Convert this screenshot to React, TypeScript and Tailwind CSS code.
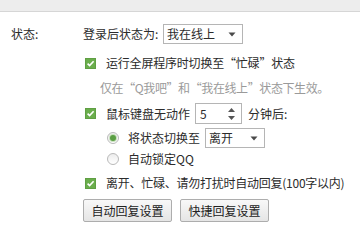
import React from "react";

function Check() {
  return (
    <span className="flex h-[11px] w-[11px] shrink-0 items-center justify-center bg-[#6aad4c] border border-[#5f9f43]">
      <svg width="9" height="9" viewBox="0 0 9 9">
        <path d="M1.6 4.6 L3.6 6.6 L7.6 2.2" fill="none" stroke="#ffffff" strokeWidth="1.6" />
      </svg>
    </span>
  );
}

function Radio({ on }: { on?: boolean }) {
  return (
    <span className="flex h-[12px] w-[12px] shrink-0 items-center justify-center rounded-full border border-[#b9b9b9] bg-gradient-to-b from-[#ececec] to-[#ffffff]">
      {on ? <span className="h-[6px] w-[6px] rounded-full bg-[#5a9e43] shadow-[0_0_0_1px_#c7e0bd]" /> : null}
    </span>
  );
}

function DownTri() {
  return (
    <svg width="8" height="5" viewBox="0 0 8 5">
      <path d="M0.5 0.5 L7.5 0.5 L4 4.5 Z" fill="#4a4a4a" />
    </svg>
  );
}

function Select({ label, w }: { label: string; w: string }) {
  return (
    <div className={`flex h-[20px] ${w} items-center justify-between border border-[#b5b5b5] bg-white pl-[3px] pr-[6px]`}>
      <span>{label}</span>
      <DownTri />
    </div>
  );
}

function Btn({ children }: { children: React.ReactNode }) {
  return (
    <div className="flex h-[23px] w-[89px] items-center justify-center rounded-[2px] border border-[#adadad] bg-gradient-to-b from-[#f8f8f8] to-[#e5e5e5] text-[#222]">
      {children}
    </div>
  );
}

export default function App() {
  return (
    <div className="relative h-[244px] w-[360px] overflow-hidden bg-white text-[12px] leading-none text-[#2b2b2b] font-['Noto_Sans_CJK_SC','Noto_Sans',sans-serif]">
      <div className="h-[12px] border-b border-[#d6d6d6] bg-[#ededed]" />
      <div className="flex pt-[12px]">
        <div className="w-[83px] pl-[11px]">
          <div className="flex h-[20px] items-center">状态:</div>
        </div>
        <div className="flex flex-col">
          <div className="flex h-[20px] items-center">
            <span className="w-[80px]">登录后状态为:</span>
            <Select label="我在线上" w="w-[80px]" />
          </div>
          <div className="mt-[9px] flex h-[20px] items-center pl-[2px]">
            <Check />
            <span className="ml-[10px] tracking-[-0.2px]">运行全屏程序时切换至“忙碌”状态</span>
          </div>
          <div className="mt-[5px] flex h-[20px] items-center pl-[17px] text-[#9a9a9a] tracking-[-0.4px]">
            仅在“Q我吧”和“我在线上”状态下生效。
          </div>
          <div className="mt-[5px] flex h-[21px] items-center pl-[2px]">
            <Check />
            <span className="ml-[10px] w-[89px]">鼠标键盘无动作</span>
            <div className="flex h-[21px] w-[47px] items-center justify-between border border-[#b5b5b5] bg-white pl-[4px] pr-[6px]">
              <span>5</span>
              <div className="flex flex-col items-center gap-[4px]">
                <svg width="7" height="4" viewBox="0 0 7 4">
                  <path d="M0 4 L7 4 L3.5 0 Z" fill="#555" />
                </svg>
                <svg width="7" height="4" viewBox="0 0 7 4">
                  <path d="M0 0 L7 0 L3.5 4 Z" fill="#555" />
                </svg>
              </div>
            </div>
            <span className="ml-[6px]">分钟后:</span>
          </div>
          <div className="mt-[4px] flex h-[20px] items-center pl-[24px]">
            <Radio on />
            <span className="ml-[9px] w-[77px]">将状态切换至</span>
            <Select label="离开" w="w-[60px]" />
          </div>
          <div className="mt-[1px] flex h-[20px] items-center pl-[24px]">
            <Radio />
            <span className="ml-[9px]">自动锁定QQ</span>
          </div>
          <div className="mt-[4px] flex h-[20px] items-center pl-[2px]">
            <Check />
            <span className="ml-[10px] tracking-[-0.25px]">离开、忙碌、请勿打扰时自动回复(100字以内)</span>
          </div>
          <div className="mt-[6px] flex items-center gap-[8px]">
            <Btn>自动回复设置</Btn>
            <Btn>快捷回复设置</Btn>
          </div>
        </div>
      </div>
    </div>
  );
}
